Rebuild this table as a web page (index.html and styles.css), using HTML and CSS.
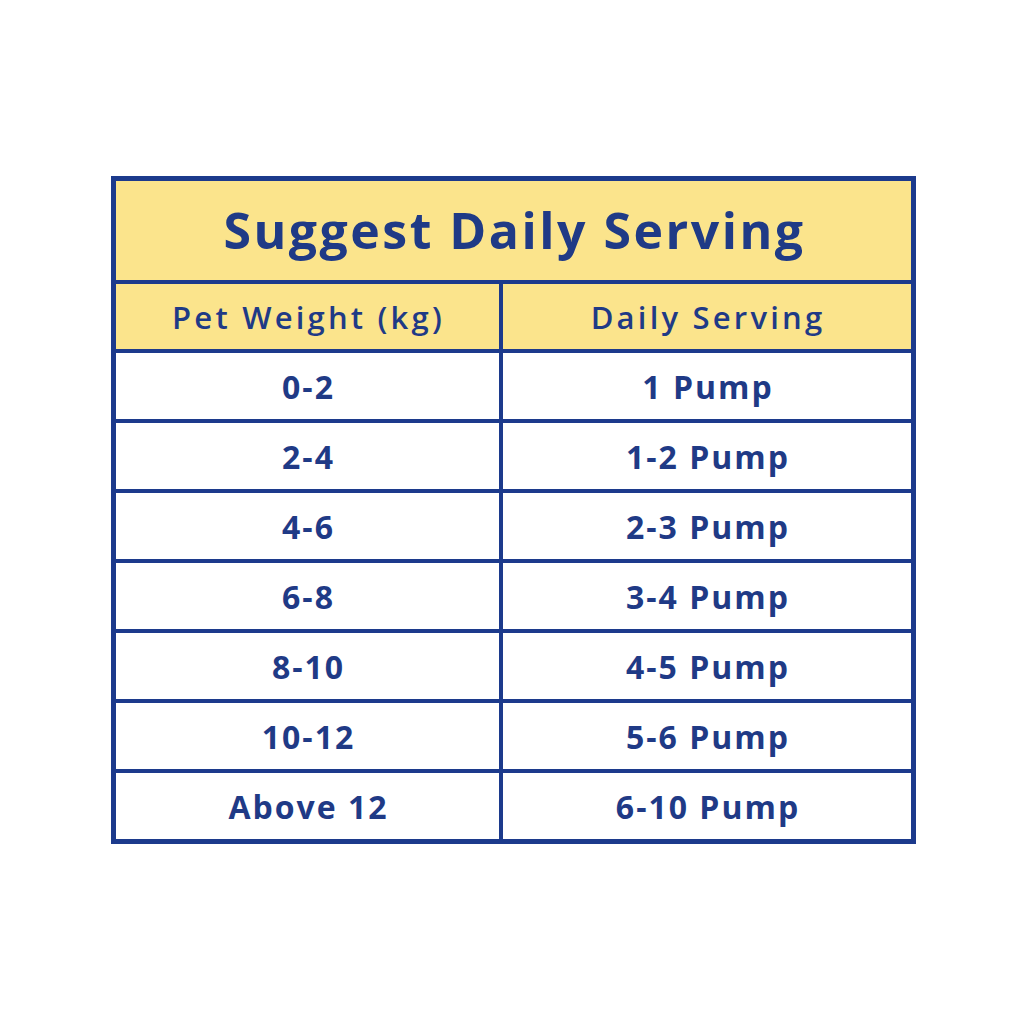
FILE: index.html
```html
<!DOCTYPE html>
<html>
<head>
<meta charset="utf-8">
<link rel="stylesheet" href="styles.css">
</head>
<body>
<div class="page">
  <div class="chart">
    <div class="cell title">Suggest Daily Serving</div>
    <div class="cell head">Pet Weight (kg)</div>
    <div class="cell head">Daily Serving</div>
    <div class="cell">0-2</div><div class="cell">1 Pump</div>
    <div class="cell">2-4</div><div class="cell">1-2 Pump</div>
    <div class="cell">4-6</div><div class="cell">2-3 Pump</div>
    <div class="cell">6-8</div><div class="cell">3-4 Pump</div>
    <div class="cell">8-10</div><div class="cell">4-5 Pump</div>
    <div class="cell">10-12</div><div class="cell">5-6 Pump</div>
    <div class="cell">Above 12</div><div class="cell">6-10 Pump</div>
  </div>
</div>
</body>
</html>
```
FILE: styles.css
```css
html, body {
  margin: 0;
  padding: 0;
  background: #ffffff;
}
.page {
  width: 1024px;
  height: 1024px;
  padding: 176px 0 0 111px;
  box-sizing: border-box;
}
.chart {
  width: 805px;
  box-sizing: border-box;
  display: grid;
  grid-template-columns: 383px 408px;
  grid-template-rows: 99px 65px repeat(7, 66px);
  gap: 4px;
  padding: 5px;
  background: #1c3a8c;
  font-family: "Open Sans", "Noto Sans", sans-serif;
  color: #1f3a86;
}
.cell {
  background: #ffffff;
  display: flex;
  align-items: center;
  justify-content: center;
  font-size: 32px;
  font-weight: 700;
  letter-spacing: 2px;
  padding-left: 2px;
}
.title {
  grid-column: 1 / span 2;
  background: #fbe48c;
  font-size: 50px;
  font-weight: 700;
  letter-spacing: 2.5px;
  padding-bottom: 2px;
}
.head {
  background: #fbe48c;
  font-size: 31px;
  font-weight: 600;
  letter-spacing: 3.2px;
}
```
